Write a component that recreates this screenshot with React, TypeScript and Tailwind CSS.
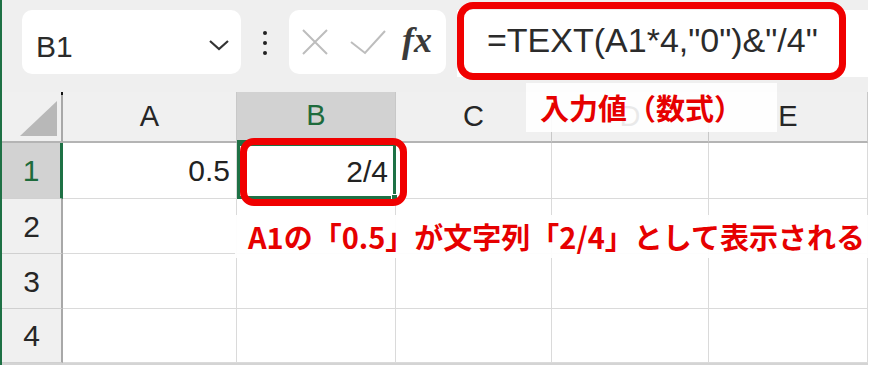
import React from 'react';

const cell = 'border-r border-b border-[#dadada] bg-white';
const colHead = 'flex items-center justify-center border-r border-b-2 border-[#c8c8c8] border-b-[#b4b4b4] bg-[#f0f0f0] text-[29px] text-[#262626]';
const rowHead = 'flex items-center justify-center border-r-2 border-b border-[#d0d0d0] border-r-[#a8a8a8] bg-[#f0f0f0] text-[30px] text-[#262626]';

const App: React.FC = () => {
  return (
    <div className="relative w-[886px] h-[365px] overflow-hidden bg-white font-['Liberation_Sans',Arial,sans-serif]">
      <div className="flex flex-col w-[868px] h-full border-l-2 border-[#1e7145] bg-[#efefef]">
        {/* formula bar */}
        <div className="flex items-start h-[92px] pt-[10px] pl-[20px]">
          <div className="flex items-center justify-between w-[219px] h-[64px] pl-[14px] pr-[11px] rounded-[10px] bg-white">
            <span className="pt-[8px] text-[30px] text-[#2b2b2b]">B1</span>
            <svg width="22" height="12" viewBox="0 0 22 12" className="mt-[6px]">
              <path d="M2 2 L11 10 L20 2" fill="none" stroke="#333" strokeWidth="2.2" />
            </svg>
          </div>
          <div className="flex flex-col gap-[6px] ml-[22px] mt-[21px]">
            <span className="w-[4px] h-[4px] rounded-full bg-[#222]" />
            <span className="w-[4px] h-[4px] rounded-full bg-[#222]" />
            <span className="w-[4px] h-[4px] rounded-full bg-[#222]" />
          </div>
          <div className="flex items-center w-[157px] h-[64px] ml-[22px] pl-[13px] rounded-[10px] bg-white">
            <svg width="26" height="26" viewBox="0 0 26 26">
              <path d="M1 1 L25 25 M25 1 L1 25" fill="none" stroke="#bdbdbd" strokeWidth="2" />
            </svg>
            <svg width="36" height="26" viewBox="0 0 36 26" className="ml-[22px]">
              <path d="M1 13 L15 24 L35 2" fill="none" stroke="#bdbdbd" strokeWidth="2" />
            </svg>
            <span className="ml-[16px] pb-[4px] font-['Liberation_Serif',serif] italic font-bold text-[36px] text-[#3a3a3a]">fx</span>
          </div>
          <div className="flex items-center flex-1 h-[67px] ml-[11px] pl-[30px] pb-[6px] bg-white">
            <span className="text-[34px] text-[#2b2b2b] whitespace-nowrap">=TEXT(A1*4,"0")&amp;"/4"</span>
          </div>
        </div>

        {/* sheet grid */}
        <div className="grid grid-cols-[61px_174px_159px_156px_157px_159px] grid-rows-[51px_56px_55px_55px_54px]">
          <div className="relative border-r-2 border-b-2 border-[#a8a8a8] border-b-[#b4b4b4] bg-[#f0f0f0]">
            <svg width="37" height="35" viewBox="0 0 37 35" className="absolute left-[18px] bottom-[5px]">
              <path d="M0 35 L37 35 L37 0 Z" fill="#b8b8b8" />
            </svg>
            <span className="absolute -right-[2px] top-0 w-[2px] h-[3px] bg-[#111]" />
          </div>
          <div className={colHead}>A</div>
          <div className="flex items-center justify-center border-r border-b-[3px] border-[#c8c8c8] border-b-[#1e7145] bg-[#d2d2d2] text-[29px] text-[#1e6b3c]">B</div>
          <div className={colHead}>C</div>
          <div className={colHead}>D</div>
          <div className={colHead}>E</div>

          <div className="flex items-center justify-center border-r-[3px] border-b border-[#d0d0d0] border-r-[#1e7145] bg-[#d2d2d2] text-[30px] text-[#1e6b3c]">1</div>
          <div className={`${cell} flex items-center justify-end pr-[6px] text-[30px] text-[#222]`}>0.5</div>
          <div className="relative flex items-center justify-end pr-[5px] border-[3px] border-[#1e7145] bg-white text-[30px] text-[#222]">
            2/4
            <span className="absolute -right-[5px] -bottom-[5px] w-[7px] h-[7px] bg-[#1e7145] border border-white" />
          </div>
          <div className={cell} />
          <div className={cell} />
          <div className={cell} />

          <div className={rowHead}>2</div>
          <div className={cell} />
          <div className={cell} />
          <div className={cell} />
          <div className={cell} />
          <div className={cell} />

          <div className={rowHead}>3</div>
          <div className={cell} />
          <div className={cell} />
          <div className={cell} />
          <div className={cell} />
          <div className={cell} />

          <div className={rowHead}>4</div>
          <div className={cell} />
          <div className={cell} />
          <div className={cell} />
          <div className={cell} />
          <div className={cell} />
        </div>
        <div className="h-[2px] bg-[#d4d4d4]" />
      </div>

      {/* callouts */}
      <div className="absolute left-[457px] top-[2px] w-[389px] h-[78px] rounded-[16px] border-[7px] border-[#f00000]" />
      <div className="absolute left-[240px] top-[138px] w-[167px] h-[68px] rounded-[14px] border-[7px] border-[#f00000]" />
      <div className="absolute left-[526px] top-[83px] flex items-center w-[251px] h-[49px] pl-[14px] bg-white/90 font-['Noto_Sans_CJK_JP',sans-serif] font-bold text-[29px] text-[#e60000]">
        入力値（数式）
      </div>
      <div className="absolute left-[235px] top-[215px] flex items-center w-[633px] h-[43px] pl-[13px] bg-white/95 font-['Noto_Sans_CJK_JP',sans-serif] font-bold text-[29px] text-[#e60000] whitespace-nowrap">
        A1の「0.5」が文字列「2/4」として表示される
      </div>
    </div>
  );
};

export default App;
